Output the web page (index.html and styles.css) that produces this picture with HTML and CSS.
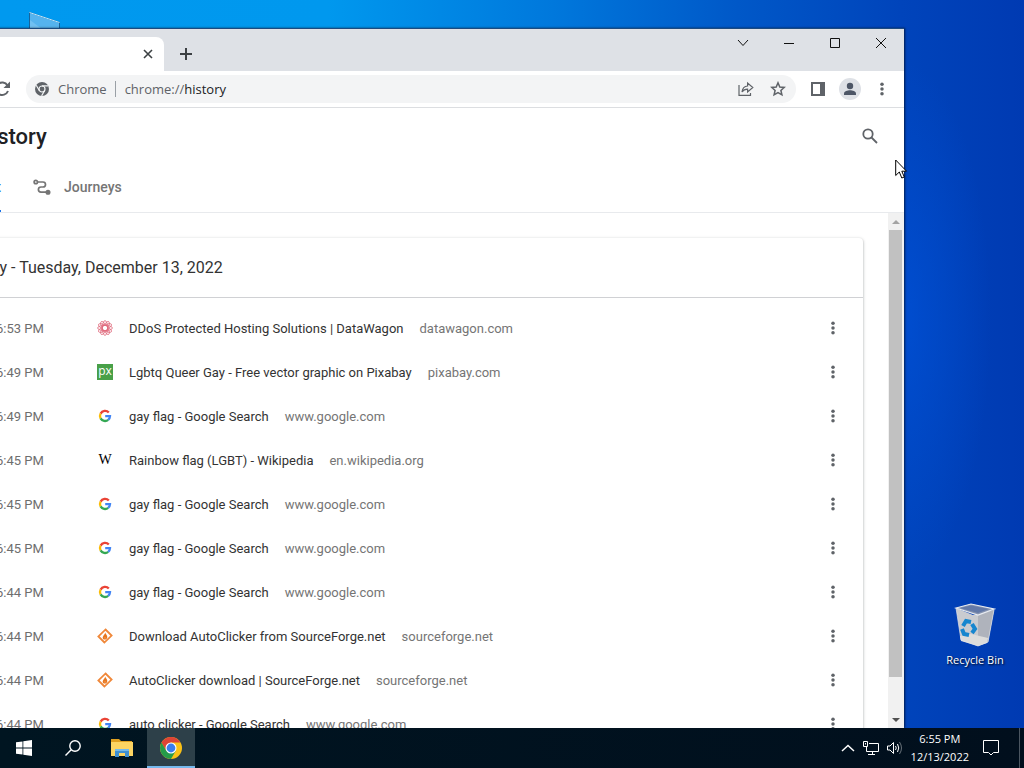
FILE: index.html
```
<!DOCTYPE html>
<html lang="en">
<head>
    <meta charset="utf-8">
    <title>History</title>
    <link rel="stylesheet" href="styles.css">
</head>
<body>
    <!-- Shared icons -->
    <svg class="sprite" aria-hidden="true">
        <symbol id="dots" viewBox="0 0 16 16">
            <circle cx="8" cy="2.5" r="2"/><circle cx="8" cy="8" r="2"/><circle cx="8" cy="13.5" r="2"/>
        </symbol>
        <symbol id="google" viewBox="0 0 16 16" fill="none" stroke-width="2.3">
            <path stroke="#ea4335" d="M3.6 5.6A5 5 0 0 1 11.8 4.6"/>
            <path stroke="#fbbc05" d="M3.6 5.6A5 5 0 0 0 3.6 10.4"/>
            <path stroke="#34a853" d="M3.6 10.4A5 5 0 0 0 11.2 11.8"/>
            <path stroke="#4285f4" d="M11.2 11.8A5 5 0 0 0 13 8.2H8.2"/>
        </symbol>
        <symbol id="sourceforge" viewBox="0 0 16 16">
            <path fill="none" stroke="#f0883a" stroke-width="1.8" d="M7 14L1.4 8.4L8.6 1.4L9.6 2.4M9 2L14.6 7.6L7.4 14.6L6.4 13.6"/>
            <path fill="#e8771e" d="M8.2 4.4C8.6 6.4 10.6 7 10.3 9.2C10.1 10.7 9 11.6 7.8 11.6C6.4 11.6 5.6 10.5 5.7 9.2C5.9 7.4 7.9 6.8 8.2 4.4Z"/>
            <path fill="#fbd9b8" d="M8 9C8.5 9.700 8.5 10.300 8 10.8C7.500 10.300 7.5 9.700 8 9Z"/>
        </symbol>
        <symbol id="datawagon" viewBox="0 0 16 16" fill="none" stroke="#e0697c" stroke-width=".8">
            <ellipse cx="8" cy="8" rx="7.4" ry="2.6"/>
            <ellipse cx="8" cy="8" rx="7.4" ry="2.6" transform="rotate(30 8 8)"/>
            <ellipse cx="8" cy="8" rx="7.4" ry="2.6" transform="rotate(60 8 8)"/>
            <ellipse cx="8" cy="8" rx="7.4" ry="2.6" transform="rotate(90 8 8)"/>
            <ellipse cx="8" cy="8" rx="7.4" ry="2.6" transform="rotate(120 8 8)"/>
            <ellipse cx="8" cy="8" rx="7.4" ry="2.6" transform="rotate(150 8 8)"/>
        </symbol>
    </svg>

    <main class="desktop">
        <div class="shortcut computer">
            <svg width="34" height="32" viewBox="0 0 34 32">
                <path fill="#55b3ee" stroke="#17649c" d="M1.500 .5L31.500 10.500V28L1.500 30Z"/>
                <path fill="none" stroke="#b9e5fb" d="M1.500 .5L31.500 10.500"/>
                <path fill="#8bcdf5" opacity=".5" d="M2 8L26 26L2 30Z"/>
            </svg>
        </div>
        <div class="shortcut recycle">
            <svg width="42" height="46" viewBox="0 0 42 46">
                <path fill="#c9cbd0" d="M2 6L19 13L40 8L34 40L24 44L7 38Z"/>
                <path fill="#afb3bc" d="M24 12L40 8L34 40L24 44Z"/>
                <path fill="#8593b0" stroke="#e8ebf0" stroke-width="1.200" d="M2 6L17 2L40 7L24 13Z"/>
                <path fill="#6379a8" d="M6 6L17 3.500L35 7L24 11Z"/>
                <path fill="#dcdcdb" d="M6 34L17 32L34 36L33 41L24 44L7 39Z"/>
                <path fill="none" stroke="#dfe2e6" stroke-width=".7" d="M2 6L7 38L24 44L34 40L40 8"/>
                <g fill="none" stroke="#1686cf" stroke-width="4">
                    <path d="M9 24L12 19L17 20"/>
                    <path d="M18 22L21 27L18 31"/>
                    <path d="M8 27L10 32L15 33"/>
                </g>
            </svg>
            <span>Recycle Bin</span>
        </div>

        <section class="window">
            <header class="titlebar">
                <div class="tab">
                    <button class="tab-close" aria-label="Close tab">
                        <svg width="10" height="10" viewBox="0 0 10 10"><path d="M1 1L9 9M9 1L1 9"/></svg>
                    </button>
                </div>
                <button class="new-tab" aria-label="New tab">
                    <svg width="12" height="12" viewBox="0 0 12 12"><path d="M6 0V12M0 6H12"/></svg>
                </button>
                <div class="controls">
                    <button aria-label="Search tabs"><svg width="12" height="10" viewBox="0 0 12 10"><path d="M1 2L6 7.500L11 2"/></svg></button>
                    <button aria-label="Minimize"><svg width="10" height="10" viewBox="0 0 10 10"><path d="M0 5.500H10"/></svg></button>
                    <button aria-label="Maximize"><svg width="10" height="10" viewBox="0 0 10 10"><path d="M.5 .5H9.500V9.500H.5Z"/></svg></button>
                    <button aria-label="Close"><svg width="12" height="12" viewBox="0 0 12 12"><path d="M1 1L11 11M11 1L1 11"/></svg></button>
                </div>
            </header>

            <nav class="toolbar">
                <button aria-label="Reload">
                    <svg width="20" height="20" viewBox="0 0 20 20"><path fill="none" stroke="#5f6368" stroke-width="2" d="M15.500 6.500A6.200 6.200 0 1 0 16 12"/><path fill="#5f6368" d="M18 2.500V9H11.500Z"/></svg>
                </button>
                <div class="omnibox">
                    <svg class="site" width="14" height="14" viewBox="0 0 14 14">
                        <circle cx="7" cy="7" r="7" fill="#5f6368"/>
                        <circle cx="7" cy="7" r="3" fill="#5f6368" stroke="#f1f3f4" stroke-width="1.200"/>
                        <path fill="none" stroke="#f1f3f4" stroke-width="1.200" d="M7 3.900H13.200M4.300 8.500L1.200 3.200M9.700 8.500L6.600 13.900"/>
                    </svg>
                    <span class="origin">Chrome</span>
                    <span class="url">chrome://<b>history</b></span>
                    <button aria-label="Share">
                        <svg width="16" height="16" viewBox="0 0 16 16"><path fill="none" stroke="#5f6368" stroke-width="1.200" d="M1 4V14.400H12.500V12M4 11C4.500 7 6.500 5.200 9.600 5V2L14.800 6.500L9.600 11V8.200C7 8.200 5.300 9 4 11Z"/></svg>
                    </button>
                    <button aria-label="Bookmark">
                        <svg width="16" height="16" viewBox="0 0 16 16"><path fill="none" stroke="#5f6368" stroke-width="1.500" d="M8 1.800L9.800 6L14.200 6.400L10.900 9.400L11.900 13.800L8 11.500L4.100 13.800L5.100 9.400L1.800 6.400L6.200 6Z"/></svg>
                    </button>
                </div>
                <button aria-label="Side panel">
                    <svg width="14" height="14" viewBox="0 0 14 14"><path fill="#5f6368" fill-rule="evenodd" d="M0 0H14V14H0ZM2 2V12H9V2Z"/></svg>
                </button>
                <button aria-label="Profile">
                    <svg width="22" height="22" viewBox="0 0 22 22"><circle cx="11" cy="11" r="11" fill="#dee1e6"/><circle cx="11" cy="8" r="3.200" fill="#4d5666"/><path fill="#4d5666" d="M5 17V15.500C5 13.200 8.500 12.300 11 12.300S17 13.200 17 15.500V17Z"/></svg>
                </button>
                <button aria-label="Menu">
                    <svg width="14" height="14" viewBox="0 0 16 16" fill="#5f6368"><use href="#dots"/></svg>
                </button>
            </nav>

            <div class="heading">
                <h1>History</h1>
                <button aria-label="Search history">
                    <svg width="16" height="16" viewBox="0 0 16 16" fill="none" stroke="#5f6368" stroke-width="1.800"><circle cx="6" cy="6" r="4.700"/><path d="M9.500 9.500L15 15"/></svg>
                </button>
            </div>
            <div class="views">
                <a class="view active" href="#list">List</a>
                <a class="view" href="#journeys">
                    <svg width="18" height="16" viewBox="0 0 18 16" fill="none" stroke="#757575" stroke-width="1.700">
                        <circle cx="2.800" cy="3" r="1.700"/>
                        <path d="M4.500 3H10A2.500 2.500 0 0 1 10 8H8A2.600 2.600 0 0 0 8 13.200H13"/>
                        <circle cx="15" cy="13.200" r="1.700" fill="#757575"/>
                    </svg>
                    Journeys
                </a>
            </div>

            <div class="viewport">
                <div class="content">
                    <div class="card">
                        <h2>Today - Tuesday, December 13, 2022</h2>
                        <ul>
                            <li>
                                <time>6:53 PM</time>
                                <svg class="favicon"><use href="#datawagon"/></svg>
                                <a href="#">DDoS Protected Hosting Solutions | DataWagon</a>
                                <span class="domain">datawagon.com</span>
                                <button aria-label="Actions"><svg><use href="#dots"/></svg></button>
                            </li>
                            <li>
                                <time>6:49 PM</time>
                                <span class="favicon pixabay">px</span>
                                <a href="#">Lgbtq Queer Gay - Free vector graphic on Pixabay</a>
                                <span class="domain">pixabay.com</span>
                                <button aria-label="Actions"><svg><use href="#dots"/></svg></button>
                            </li>
                            <li>
                                <time>6:49 PM</time>
                                <svg class="favicon"><use href="#google"/></svg>
                                <a href="#">gay flag - Google Search</a>
                                <span class="domain">www.google.com</span>
                                <button aria-label="Actions"><svg><use href="#dots"/></svg></button>
                            </li>
                            <li>
                                <time>6:45 PM</time>
                                <span class="favicon wikipedia">W</span>
                                <a href="#">Rainbow flag (LGBT) - Wikipedia</a>
                                <span class="domain">en.wikipedia.org</span>
                                <button aria-label="Actions"><svg><use href="#dots"/></svg></button>
                            </li>
                            <li>
                                <time>6:45 PM</time>
                                <svg class="favicon"><use href="#google"/></svg>
                                <a href="#">gay flag - Google Search</a>
                                <span class="domain">www.google.com</span>
                                <button aria-label="Actions"><svg><use href="#dots"/></svg></button>
                            </li>
                            <li>
                                <time>6:45 PM</time>
                                <svg class="favicon"><use href="#google"/></svg>
                                <a href="#">gay flag - Google Search</a>
                                <span class="domain">www.google.com</span>
                                <button aria-label="Actions"><svg><use href="#dots"/></svg></button>
                            </li>
                            <li>
                                <time>6:44 PM</time>
                                <svg class="favicon"><use href="#google"/></svg>
                                <a href="#">gay flag - Google Search</a>
                                <span class="domain">www.google.com</span>
                                <button aria-label="Actions"><svg><use href="#dots"/></svg></button>
                            </li>
                            <li>
                                <time>6:44 PM</time>
                                <svg class="favicon"><use href="#sourceforge"/></svg>
                                <a href="#">Download AutoClicker from SourceForge.net</a>
                                <span class="domain">sourceforge.net</span>
                                <button aria-label="Actions"><svg><use href="#dots"/></svg></button>
                            </li>
                            <li>
                                <time>6:44 PM</time>
                                <svg class="favicon"><use href="#sourceforge"/></svg>
                                <a href="#">AutoClicker download | SourceForge.net</a>
                                <span class="domain">sourceforge.net</span>
                                <button aria-label="Actions"><svg><use href="#dots"/></svg></button>
                            </li>
                            <li>
                                <time>6:44 PM</time>
                                <svg class="favicon"><use href="#google"/></svg>
                                <a href="#">auto clicker - Google Search</a>
                                <span class="domain">www.google.com</span>
                                <button aria-label="Actions"><svg><use href="#dots"/></svg></button>
                            </li>
                        </ul>
                    </div>
                </div>
                <div class="scrollbar">
                    <svg width="16" height="17" viewBox="0 0 16 17"><path fill="#a3a3a3" d="M4 11L8 7L12 11Z"/></svg>
                    <div class="track"><div class="thumb"></div></div>
                    <svg width="16" height="17" viewBox="0 0 16 17"><path fill="#505050" d="M4 7L8 11L12 7Z"/></svg>
                </div>
            </div>
        </section>

        <svg class="cursor" width="14" height="21" viewBox="0 0 14 21">
            <path fill="#fff" stroke="#000" d="M.7 1V16.500L4.300 13L6.800 19L9.300 18L6.800 12.200H11.500Z"/>
        </svg>
    </main>

    <footer class="taskbar">
        <button aria-label="Start">
            <svg width="16" height="16" viewBox="0 0 16 16" fill="#fff"><path d="M0 2.300L6.500 1.400V7.600H0ZM7.300 1.300L16 0V7.600H7.300ZM0 8.400H6.500V14.600L0 13.700ZM7.300 8.400H16V16L7.300 14.700Z"/></svg>
        </button>
        <button aria-label="Search">
            <svg width="16" height="16" viewBox="0 0 16 16" fill="none" stroke="#fff" stroke-width="1.400"><circle cx="10" cy="6" r="5.200"/><path d="M6.200 9.800L.5 15.500"/></svg>
        </button>
        <button aria-label="File Explorer">
            <svg width="22" height="18" viewBox="0 0 22 18">
                <path fill="#e0a020" d="M0 0H8L10 2H21V5H0Z"/>
                <path fill="#fcd462" d="M0 3H22V17H0Z"/>
                <path fill="#3f8fd0" d="M4 18V10H18V18H14V14H8V18Z"/>
                <path fill="#74b9ea" d="M4 10H18V12H4Z"/>
            </svg>
        </button>
        <button class="running" aria-label="Google Chrome">
            <svg width="22" height="22" viewBox="0 0 22 22">
                <circle cx="11" cy="11" r="11" fill="#fbc116"/>
                <path fill="#dd4436" d="M1.500 5.500A11 11 0 0 1 20.500 5.500H11L6.200 13.700Z"/>
                <path fill="#259b49" d="M1.500 5.500A11 11 0 0 0 11 22L15.800 13.800H6.300Z"/>
                <circle cx="11" cy="11" r="5.500" fill="#fff"/>
                <circle cx="11" cy="11" r="4.400" fill="#3b7ded"/>
            </svg>
        </button>
        <div class="tray">
            <svg width="14" height="8" viewBox="0 0 14 8" stroke-width="1.500"><path d="M1 7L7 1.500L13 7"/></svg>
            <svg width="16" height="14" viewBox="0 0 16 14"><path d="M6 2.500H15.500V10.500H3.500V6M9.500 10.500V13.500M5 13.500H12M.5 .5H4.500V5.500H.5ZM2.500 2V3.500"/></svg>
            <svg width="16" height="14" viewBox="0 0 16 14"><path d="M.5 5H3L6.500 1.500V12.500L3 9H.5ZM8.500 5Q10 7 8.500 9M10.500 3Q13 7 10.500 11"/><path opacity=".4" d="M12.500 1Q16.500 7 12.500 13"/></svg>
            <time class="clock">6:55 PM<br>12/13/2022</time>
            <svg width="16" height="16" viewBox="0 0 16 16"><path d="M.5 .5H15.500V12.500H10.500L8 15L5.500 12.500H.5Z"/></svg>
        </div>
    </footer>
</body>
</html>
```
FILE: styles.css
```
* {
    box-sizing: border-box;
}

body {
    display: flex;
    flex-direction: column;
    font-family: Roboto, "Liberation Sans", sans-serif;
    font-size: 13px;
    height: 100vh;
    margin: 0;
    overflow: hidden;
}

button {
    align-items: center;
    background: none;
    border: 0;
    display: flex;
    flex: none;
    height: 28px;
    justify-content: center;
    padding: 0;
    width: 28px;
}

a {
    color: inherit;
    text-decoration: none;
}

.sprite {
    height: 0;
    position: absolute;
    width: 0;
}

/* Desktop */
.desktop {
    background:
        radial-gradient(ellipse 90px 260px at 88% 44%, rgba(0, 84, 222, .6), transparent),
        linear-gradient(90deg, #0099ef 0%, #0098ee 32%, #0078dc 54%, #0058c8 72%, #0044bb 88%, #003ab2 100%);
    flex: 1;
    min-height: 0;
    overflow: hidden;
    position: relative;
}

.shortcut {
    position: absolute;
}

.computer {
    left: 28px;
    top: 12px;
}

.recycle {
    align-items: center;
    color: #fff;
    display: flex;
    flex-direction: column;
    font: 11px/16px "Open Sans", sans-serif;
    gap: 4px;
    right: 12px;
    text-shadow: 1px 1px 2px #000;
    top: 602px;
    width: 74px;
}

/* Browser window, partly off the left edge of the screen */
.window {
    background: #fff;
    border: solid #1b4a80;
    border-width: 1px 0 0;
    bottom: 0;
    box-shadow: 1px 0 2px rgba(0, 0, 0, .6);
    display: flex;
    flex-direction: column;
    left: -40px;
    position: absolute;
    right: 120px;
    top: 28px;
}

.titlebar {
    background: #dee1e6;
    display: flex;
    flex: none;
    height: 42px;
}

.tab {
    align-items: center;
    align-self: flex-end;
    background: #fff;
    border-radius: 8px 8px 0 0;
    display: flex;
    height: 34px;
    justify-content: flex-end;
    padding-right: 2px;
    width: 204px;
}

.tab-close svg {
    fill: none;
    stroke: #3c4043;
    stroke-width: 1.6;
}

.new-tab {
    align-self: flex-end;
    margin: 0 0 3px 8px;
}

.new-tab svg {
    stroke: #3c4043;
    stroke-width: 2;
}

.controls {
    display: flex;
    margin-left: auto;
}

.controls button {
    width: 46px;
}

.controls svg {
    fill: none;
    stroke: #111;
}

.toolbar {
    align-items: center;
    border-bottom: 1px solid #dcdee1;
    display: flex;
    flex: none;
    gap: 4px;
    height: 37px;
    padding: 0 8px 0 28px;
}

.omnibox {
    align-items: center;
    background: #f3f4f5;
    border-radius: 14px;
    color: #5f6368;
    display: flex;
    flex: 1;
    font: 13px/16px "Open Sans", sans-serif;
    gap: 4px;
    height: 28px;
    margin: 0 4px 0 6px;
    padding: 0 4px 0 9px;
}

.origin {
    border-right: 1px solid #9aa0a6;
    margin: 0 5px;
    padding-right: 8px;
}

.url {
    flex: 1;
}

.url b {
    color: #202124;
    font-weight: normal;
}

/* History page */
.heading {
    align-items: center;
    display: flex;
    flex: none;
    height: 56px;
    justify-content: space-between;
    padding: 0 20px 0 16px;
}

h1 {
    color: #202124;
    font-size: 22px;
    font-weight: 500;
    margin: 0;
}

.views {
    border-bottom: 1px solid #e8eaed;
    color: #757575;
    display: flex;
    flex: none;
    font-size: 14px;
    font-weight: 500;
    gap: 32px;
    height: 49px;
    padding-left: 18px;
}

.view {
    align-items: center;
    display: flex;
    gap: 13px;
    padding-bottom: 2px;
}

.active {
    border-bottom: 2px solid #1a73e8;
    color: #1a73e8;
    padding-bottom: 0;
}

.viewport {
    display: flex;
    flex: 1;
    min-height: 0;
}

.content {
    flex: 1;
    overflow: hidden;
    padding: 25px 25px 0 2px;
}

.card {
    background: #fff;
    border-radius: 4px;
    box-shadow: 0 1px 2px rgba(60, 64, 67, .3), 0 1px 3px 1px rgba(60, 64, 67, .15);
}

h2 {
    border-bottom: 1px solid #d0d1d4;
    color: #333;
    font-size: 16px;
    font-weight: 400;
    line-height: 59px;
    margin: 0;
    padding-left: 2px;
}

ul {
    list-style: none;
    margin: 0;
    padding: 8px 16px 8px 34px;
}

li {
    align-items: center;
    color: #333;
    display: flex;
    height: 44px;
}

li time {
    color: #6e6e6e;
    width: 101px;
}

li button {
    margin-left: auto;
}

li button svg {
    fill: #5f6368;
    height: 14px;
    width: 14px;
}

.favicon {
    flex: none;
    height: 16px;
    margin-right: 16px;
    width: 16px;
}

.pixabay {
    background: #48a048;
    color: #fff;
    font: 12px/14px "Open Sans", sans-serif;
    text-align: center;
}

.wikipedia {
    color: #000;
    font: 14px/16px "Liberation Serif", serif;
    text-align: center;
}

.domain {
    color: #757575;
    margin-left: 16px;
}

.scrollbar {
    background: #f1f1f1;
    display: flex;
    flex: none;
    flex-direction: column;
    width: 16px;
}

.track {
    flex: 1;
    padding: 0 2px 0 1px;
}

.thumb {
    background: #c1c1c1;
    height: 93%;
}

.cursor {
    left: 895px;
    position: absolute;
    top: 159px;
}

/* Taskbar */
.taskbar {
    background: linear-gradient(90deg, #001521, #010f1d);
    display: flex;
    flex: none;
    gap: 1px;
    height: 40px;
}

.taskbar button {
    height: 40px;
    width: 48px;
}

.taskbar .running {
    background: #2d4049;
    border-bottom: 2px solid #76b9ed;
    padding-top: 2px;
}

.tray {
    align-items: center;
    border-right: 1px solid #4b5661;
    color: #fff;
    display: flex;
    gap: 8px;
    margin: 0 4px 0 auto;
    padding-right: 20px;
}

.tray svg {
    fill: none;
    stroke: #fff;
}

.clock {
    font: 11px/18px "Open Sans", sans-serif;
    margin-right: 6px;
    text-align: center;
}
```
